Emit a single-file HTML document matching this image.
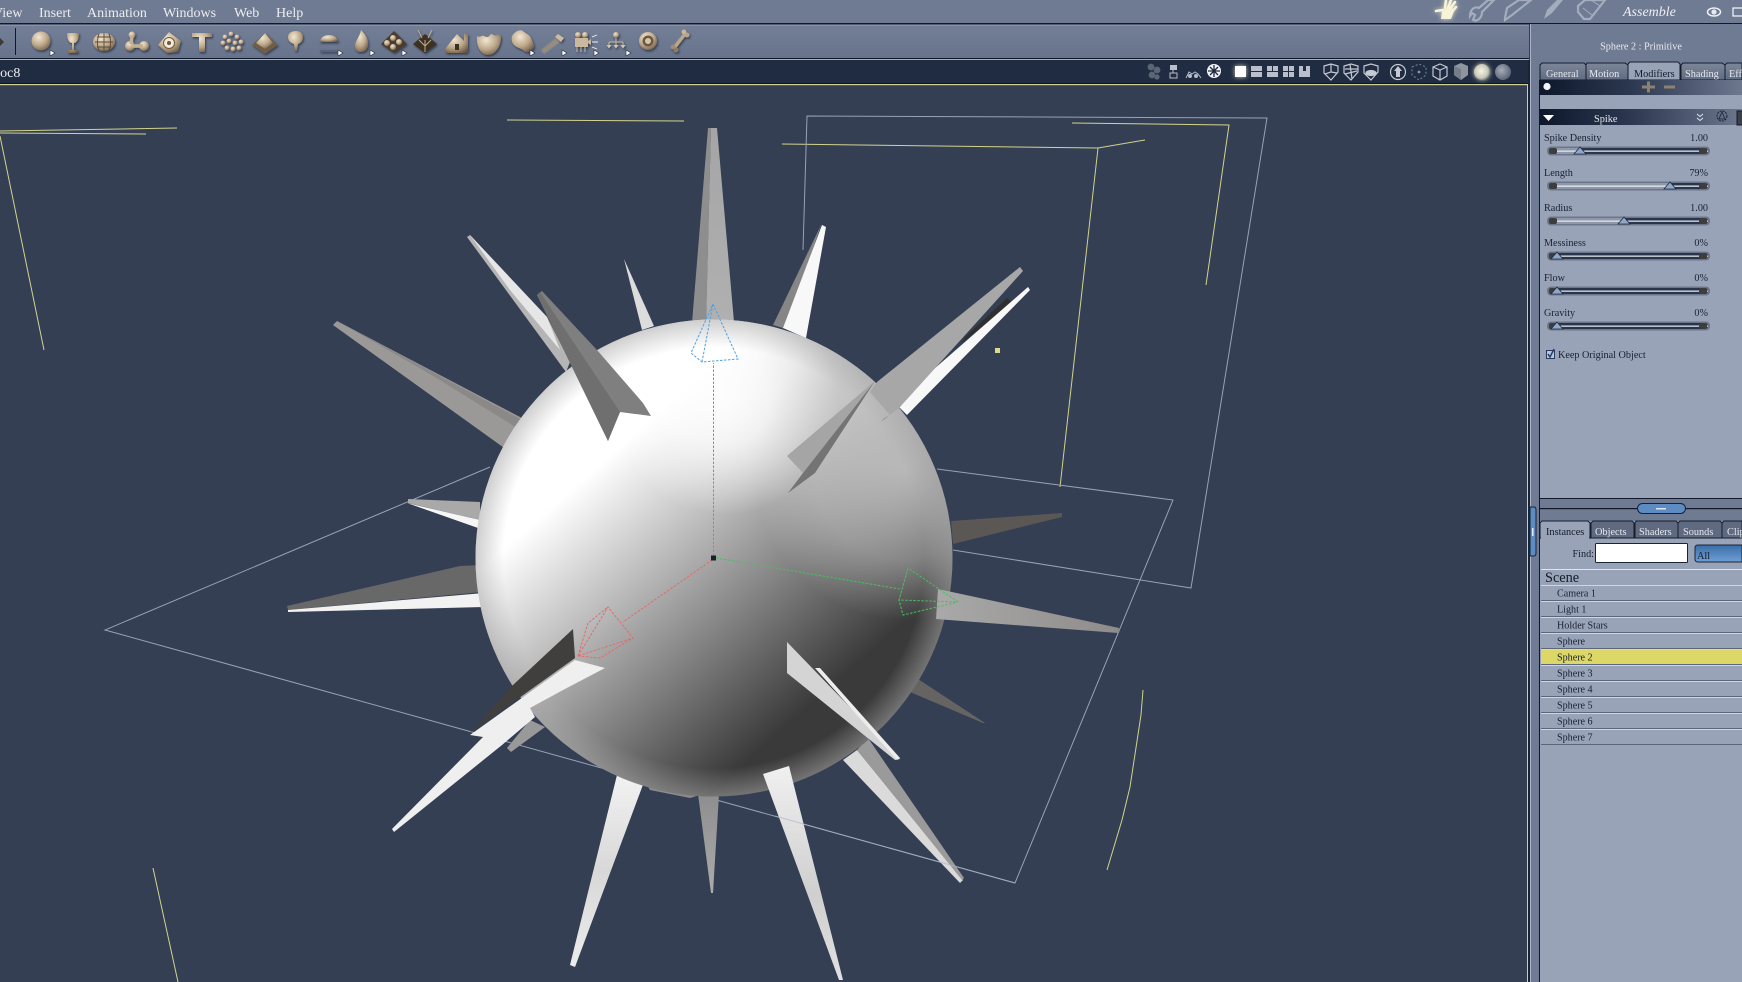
<!DOCTYPE html>
<html><head><meta charset="utf-8"><title>Sphere</title>
<style>
html,body{margin:0;padding:0;background:#343f54;width:1742px;height:982px;overflow:hidden}
svg{display:block;position:absolute;left:0;top:0}
text{font-family:"Liberation Serif",serif}
.m{font-size:14px;fill:#ecedf0}
.t{font-size:10.3px;fill:#e4e7ee}
.a{font-size:10.3px;fill:#141a28}
.l{font-size:10.2px;fill:#1a2130}
.r{font-size:10.1px;fill:#1a2130}
.g{fill:#b9bfcb;stroke:none}
.o{fill:none;stroke:#b5bccb;stroke-width:1}
.ol{fill:none;stroke:#c3c9d5;stroke-width:1.2}
.tan{fill:url(#tan)}
.dk{fill:#4a3f30}
.ar{fill:#fff;stroke:#222c40;stroke-width:.6}
</style></head><body>
<svg width="1742" height="982" viewBox="0 0 1742 982" xmlns="http://www.w3.org/2000/svg">
<defs>
<linearGradient id="sph" gradientUnits="userSpaceOnUse" x1="617" y1="449" x2="829" y2="689">
<stop offset="0" stop-color="#ffffff"/><stop offset="1" stop-color="#3a3a3a"/>
</linearGradient>
<radialGradient id="top" gradientUnits="userSpaceOnUse" cx="725" cy="400" r="115"><stop offset="0" stop-color="#fff" stop-opacity=".9"/><stop offset=".4" stop-color="#fff" stop-opacity=".7"/><stop offset="1" stop-color="#fff" stop-opacity="0"/></radialGradient>
<radialGradient id="glo" gradientUnits="userSpaceOnUse" cx="905" cy="470" r="150"><stop offset="0" stop-color="#ddd" stop-opacity=".6"/><stop offset=".6" stop-color="#ddd" stop-opacity=".35"/><stop offset="1" stop-color="#ddd" stop-opacity="0"/></radialGradient>
<radialGradient id="rim" gradientUnits="userSpaceOnUse" cx="714" cy="558" r="239"><stop offset=".88" stop-color="#aaa" stop-opacity="0"/><stop offset="1" stop-color="#a5a5a5" stop-opacity=".55"/></radialGradient>
<linearGradient id="bar" x1="0" x2="1" y1="0" y2="0"><stop offset="0" stop-color="#0e172b"/><stop offset=".45" stop-color="#2c3850"/><stop offset="1" stop-color="#6d788f"/></linearGradient>
<linearGradient id="tb" x1="0" x2="0" y1="0" y2="1"><stop offset="0" stop-color="#737f96"/><stop offset="1" stop-color="#68748c"/></linearGradient>
<linearGradient id="tabi" x1="0" x2="0" y1="0" y2="1"><stop offset="0" stop-color="#7d8799"/><stop offset="1" stop-color="#5f6b82"/></linearGradient>
<linearGradient id="blue" x1="0" x2="0" y1="0" y2="1"><stop offset="0" stop-color="#3a6ca8"/><stop offset="1" stop-color="#6fa0d4"/></linearGradient>
<radialGradient id="tan" cx=".38" cy=".3" r=".8"><stop offset="0" stop-color="#f2e6d2"/><stop offset=".55" stop-color="#bda789"/><stop offset="1" stop-color="#6a5842"/></radialGradient>
<radialGradient id="pearl" cx=".45" cy=".45" r=".6"><stop offset="0" stop-color="#f6f5e6"/><stop offset=".7" stop-color="#c9c9b8"/><stop offset="1" stop-color="#6c7280"/></radialGradient>
<radialGradient id="grey" cx=".4" cy=".4" r=".7"><stop offset="0" stop-color="#a7adb9"/><stop offset="1" stop-color="#505a6e"/></radialGradient>
<filter id="sh" x="-30%" y="-30%" width="170%" height="170%"><feDropShadow dx="1" dy="1.5" stdDeviation="1" flood-color="#1a2233" flood-opacity=".7"/></filter>
<filter id="gl" x="-60%" y="-60%" width="220%" height="220%"><feDropShadow dx="0" dy="0" stdDeviation="2.5" flood-color="#fbf6d0" flood-opacity=".8"/></filter>
<filter id="bl" x="-30%" y="-30%" width="160%" height="160%"><feGaussianBlur stdDeviation=".9"/></filter>
<linearGradient id="gA" x1="0" x2="0" y1="0" y2="1"><stop offset="0" stop-color="#a5a5a5"/><stop offset="1" stop-color="#b0b0b0"/></linearGradient>
<linearGradient id="gI" x1="0" x2="0" y1="0" y2="1"><stop offset="0" stop-color="#f2f2f2"/><stop offset=".5" stop-color="#d8d8d8"/><stop offset="1" stop-color="#ececec"/></linearGradient>
<linearGradient id="gK" x1="0" x2="0" y1="0" y2="1"><stop offset="0" stop-color="#f0f0f0"/><stop offset=".6" stop-color="#cfcfcf"/><stop offset="1" stop-color="#e0e0e0"/></linearGradient>
<linearGradient id="gJ" x1="0" x2="0" y1="0" y2="1"><stop offset="0" stop-color="#8e8e8e"/><stop offset="1" stop-color="#ababab"/></linearGradient>
<linearGradient id="gN" x1="0" x2="1" y1="0" y2="0"><stop offset="0" stop-color="#a9a9a9"/><stop offset="1" stop-color="#8f8c8a"/></linearGradient>
</defs>

<!-- chrome -->
<rect width="1742" height="982" fill="#343f54"/>
<rect x="0" y="0" width="1742" height="23" fill="#6f7b92"/>
<rect x="0" y="23" width="1530" height="1.5" fill="#10182a"/>
<rect x="1530" y="23" width="212" height="1" fill="#10182a"/>
<rect x="0" y="25" width="1529" height="33" fill="url(#tb)"/>
<rect x="0" y="24.5" width="1529" height="1" fill="#9aa4b8"/>
<rect x="0" y="58" width="1529" height="1" fill="#0f172a"/>
<rect x="0" y="59" width="1529" height="1" fill="#a6afc1"/>
<rect x="0" y="60" width="1529" height="24" fill="#202c42"/>
<rect x="0" y="83" width="1528" height="1" fill="#0f1626"/>
<rect x="0" y="84" width="1528" height="1.2" fill="#cfcf96"/>
<rect x="1527" y="84" width="1.2" height="898" fill="#cfcf96"/>
<rect x="1528" y="60" width="2" height="922" fill="#1b2436"/>
<rect x="1530" y="24" width="212" height="958" fill="#6f7b92"/>
<rect x="1530" y="24" width="1" height="958" fill="#aab3c5"/>
<rect x="1539" y="80" width="203" height="902" fill="#98a3b8"/>
<rect x="1539" y="80" width="1" height="902" fill="#10182a"/>

<!-- menu -->
<text class="m" x="-7" y="17">View</text>
<text class="m" x="39" y="17">Insert</text>
<text class="m" x="87" y="17">Animation</text>
<text class="m" x="163" y="17">Windows</text>
<text class="m" x="234" y="17">Web</text>
<text class="m" x="276" y="17">Help</text>
<text x="-10" y="77" font-size="14" fill="#ecedf0">Doc8</text>

<!-- toolbar -->
<rect x="15" y="28" width="1" height="27" fill="#10182a"/>
<polygon points="0,38 4,42 0,46" fill="#3d3a36"/>
<g filter="url(#sh)">
<circle class="tan" cx="41" cy="41" r="9.5"/>
<path class="tan" d="M67 33h12c0 6-2 10-5 10v7h4v3H68v-3h4v-7c-3 0-5-4-5-10z"/>
<ellipse class="tan" cx="104" cy="42" rx="11" ry="9"/>
<path d="M95 42h18M97 37h14M97 47h14M104 33v18M99 34c-2 5-2 12 0 16M109 34c2 5 2 12 0 16" stroke="#5a4a36" stroke-width=".9" fill="none"/>
<circle cx="132" cy="35" r="3.5" class="tan"/><circle cx="130" cy="46" r="5" class="tan"/><circle cx="144" cy="46" r="5" class="tan"/><path d="M132 36l-1 8M132 46h11" stroke="#c3b093" stroke-width="3.5"/>
<path class="tan" d="M169 32l12 9-3 11-11 1-9-8z"/>
<circle cx="169" cy="43" r="5.5" fill="#f3e9d8" stroke="#6a5842"/><circle cx="169" cy="43" r="2" fill="#6a5842"/>
<path class="tan" d="M192 33h20v4h-7v15h-6V37h-7z"/>
<g class="tan"><circle cx="225" cy="37" r="2.4"/><circle cx="231" cy="34" r="2.4"/><circle cx="237" cy="37" r="2.4"/><circle cx="223" cy="43" r="2.4"/><circle cx="229" cy="41" r="2.4"/><circle cx="235" cy="43" r="2.4"/><circle cx="241" cy="42" r="2.4"/><circle cx="227" cy="48" r="2.4"/><circle cx="233" cy="49" r="2.4"/><circle cx="239" cy="48" r="2.4"/></g>
<path d="M252 45l13-12 13 12-13 9z" fill="#6f5d47"/><path d="M256 43l9-10 8 10-8 6z" class="tan"/>
<path class="tan" d="M296 31c4 0 7 2 7 6s-2 6-5 7l-1 7h-2l-1-7c-3-1-6-3-6-7s4-6 8-6z"/>
<path class="tan" d="M320 42c0-4 4-7 9-7s9 3 9 7z"/><rect x="320" y="50" width="17" height="2" fill="#59647c"/>
<path class="tan" d="M361 30c5 5 8 10 7 16-1 5-5 6-8 6s-6-3-5-7c1-5 5-9 6-15z"/>
<path d="M381 44l13-13 13 13-13 9z" fill="#4c3e2e"/><g class="tan"><circle cx="387" cy="43" r="3"/><circle cx="393" cy="38" r="3"/><circle cx="399" cy="42" r="3"/><circle cx="393" cy="47" r="3"/></g>
<path d="M413 44l12-10 12 10-12 9z" fill="#3c3024"/><path d="M425 52V40M425 46l-6-6M425 46l6-6M418 30l4 8M432 30l-4 8" stroke="#c0ab8b" stroke-width="1" fill="none"/>
<path class="tan" d="M445 49l12-15 7 7v-7h4v16l-1 3h-21z"/><rect x="455" y="44" width="4" height="6" fill="#3b3127"/>
<path class="tan" d="M477 36c3 2 5-1 7 0s4 2 6-1 4 2 7 0 4 2 4 2c0 10-6 18-13 18s-12-9-11-19z"/>
<path class="tan" d="M512 36c3-5 8-7 11-5 3 3 6 3 8 7 2 5 5 9 1 12s-6 3-9 0c-3-2-6-2-9-5-2-2-3-6-2-9z"/>
<path d="M558 34l6 4-3 4-6-5z" fill="#cdbb9f"/>
</g>
<path d="M556 38l4 4-16 12-3-4z" fill="#a8957a" opacity=".7" filter="url(#bl)"/>
<g filter="url(#sh)">
<rect x="575" y="38" width="13" height="9" fill="#cbb99d"/><circle cx="578" cy="35" r="3" class="tan"/><circle cx="585" cy="35" r="3" class="tan"/><path d="M577 47v5M581 47v5M585 47v5" stroke="#cbb99d" fill="none"/><path d="M588 41l3-2v6l-3-2z" fill="#cbb99d"/>
</g>
<path d="M592 37l5-2M592 42h6M592 47l5 2" stroke="#f4f2ea" stroke-width=".9" fill="none"/>
<g filter="url(#sh)">
<circle cx="616" cy="35" r="3" class="tan"/><path d="M616 38v6M609 42h14M609 42v4M616 42v4M623 42v4" stroke="#ccb99d" fill="none"/><path d="M606.500 45h5l-2.500 3.500zM613.500 45h5l-2.500 3.500zM620.500 45h5l-2.500 3.500z" fill="#d6c5aa"/>
<circle cx="648" cy="41" r="9" class="tan"/><circle cx="648" cy="41" r="5.5" fill="#6a5842"/><circle cx="648" cy="41" r="3" fill="#d6c5aa"/>
<path d="M674 48l11-14" stroke="#b9a68a" stroke-width="3.5"/><circle cx="673" cy="47" r="2.500" fill="#a08d72"/><circle cx="676" cy="50" r="2.500" fill="#8d7b63"/><circle cx="684" cy="32" r="2.500" fill="#c8b69b"/><circle cx="687" cy="35" r="2.500" fill="#b9a68a"/>
</g>
<g class="ar"><path d="M50 50l5 3-5 3z"/><path d="M338 50l5 3-5 3z"/><path d="M370 50l5 3-5 3z"/><path d="M402 50l5 3-5 3z"/><path d="M530 50l5 3-5 3z"/><path d="M562 50l5 3-5 3z"/><path d="M594 50l5 3-5 3z"/><path d="M626 50l5 3-5 3z"/></g>

<!-- top right mode icons -->
<g filter="url(#gl)">
<path d="M1441 19l1-8 9-5 3 5-3 8z" fill="#f6f3d8"/>
<path d="M1443 10l-7 1M1445 8l1-8M1448 8l3-8M1450 9l5-7M1452 12l4-5" stroke="#f6f3d8" stroke-width="2.600" stroke-linecap="round" fill="none"/>
</g>
<path d="M1470 16c0-6 4-10 9-8l9-8h6l-12 12c0 6-5 10-9 8l2-5-3-2z M1474 20" fill="none" stroke="#a4adbf" stroke-width="2.2"/>
<path d="M1505 18l2-10 12-8h12l-19 15-7 5z" fill="none" stroke="#a4adbf" stroke-width="2.2"/>
<path d="M1544 19l3-9 10-10h6l-11 13z" fill="#a4adbf"/>
<path d="M1578 6l7-6h20l-15 19-6 0-6-7z" fill="none" stroke="#a4adbf" stroke-width="2.2"/><path d="M1583 8l9 7M1591 0l9 6" stroke="#a4adbf"/>
<text x="1623" y="16" font-size="14" font-style="italic" fill="#eef0f4">Assemble</text>
<ellipse cx="1714" cy="12" rx="6.5" ry="4" fill="none" stroke="#eef1f6" stroke-width="1.5"/><circle cx="1714" cy="12" r="2.6" fill="#e6eaf1"/>
<rect x="1733" y="8" width="12" height="8" fill="none" stroke="#eef1f6" stroke-width="1.3"/>

<!-- view bar icons -->
<g fill="#5a6578"><circle cx="1151" cy="67" r="3.4"/><circle cx="1157" cy="70" r="3.4"/><circle cx="1152" cy="75" r="3.4"/><circle cx="1157" cy="77" r="2.6"/></g>
<rect class="g" x="1170" y="65" width="7" height="5"/><path d="M1173 70v3" stroke="#b9bfcb"/><rect class="o" x="1170" y="73" width="7" height="5"/>
<path class="o" d="M1186 78l3-6 3 2 3-2 3 2 3 4" stroke="#9ea6b6"/><circle cx="1190" cy="76" r="2" fill="#b5bccb"/><circle cx="1196" cy="76" r="2" fill="#b5bccb"/>
<circle cx="1214" cy="71" r="7" fill="#f2f3f5"/><path d="M1208 71h12M1214 65v12M1210 67l8 8M1218 67l-8 8" stroke="#1e2a40" stroke-width="1.3"/>
<rect x="1235" y="66" width="11" height="11" fill="#fff" filter="url(#gl)"/>
<rect class="g" x="1251" y="66" width="11" height="5"/><rect class="g" x="1251" y="72" width="11" height="5"/>
<rect class="g" x="1267" y="66" width="5" height="5"/><rect class="g" x="1273" y="66" width="5" height="5"/><rect class="g" x="1267" y="72" width="11" height="5"/>
<rect class="g" x="1283" y="66" width="5" height="5"/><rect class="g" x="1289" y="66" width="5" height="5"/><rect class="g" x="1283" y="72" width="5" height="5"/><rect class="g" x="1289" y="72" width="5" height="5"/>
<path class="g" d="M1299 66h4v5h3v-5h4v11h-11z"/>
<g class="ol"><path d="M1324 66l7-2 7 2v6l-7 8-7-7zM1331 64v8l-6 2M1331 72l6 1"/><path d="M1344 66l7-2 7 2v6l-7 8-7-7zM1345 69h13M1350 64l2 15M1345 74l12-3"/><path d="M1364 66l7-2 7 2v6l-7 8-7-7z"/><ellipse cx="1371" cy="73" rx="5" ry="2.5" fill="#c3c9d5"/></g>
<circle cx="1398" cy="72" r="7.5" class="ol"/><path d="M1398 66l4 5h-2v6h-4v-6h-2z" fill="#c3c9d5"/>
<g fill="none" stroke="#7c8698" stroke-dasharray="2 2"><path d="M1412 67l7-3 7 3v8l-7 5-7-5z"/></g><circle cx="1419" cy="72" r="1.4" fill="#8d96a7"/>
<path class="ol" d="M1433 67l7-3 7 3v9l-7 4-7-4zM1433 67l7 3 7-3M1440 70v10"/>
<path d="M1454 66l7-3 7 3v9l-7 5-7-5z" fill="#8e959f"/><path d="M1454 66l7 3v11l-7-5z" fill="#767d88"/>
<circle cx="1482" cy="72" r="8" fill="url(#pearl)" filter="url(#gl)"/>
<circle cx="1503" cy="72" r="8" fill="url(#grey)"/>

<!-- viewport lines: yellow -->
<g fill="none" stroke="#d3d38c" stroke-width="1">
<path d="M0 131L177 128M0 133L146 134M0 136L44 350"/>
<path d="M507 120L684 121"/>
<path d="M782 144L1098 148L1145 140M1098 148L1060 487"/>
<path d="M1072 123L1229 125L1206 285"/>
<path d="M1143 690L1141 715L1130 787L1122 820L1107 870"/>
<path d="M153 868L178 982"/>
</g>
<!-- grey box -->
<g fill="none" stroke="#98a2b5" stroke-width="1">
<path d="M803 250L807 116L1267 118L1191 588L953 550"/>
<path d="M937 469L1173 500L1015 883L105 630L490 467"/>
</g>

<!-- back spikes -->
<polygon points="708,128 692,323 706,320 711,128" fill="#8e8e8e"/>
<polygon points="711,128 717,128 734,322 706,322" fill="url(#gA)"/>
<polygon points="467,237 470,235 547,317 570,362 566,372" fill="#b5b5b5"/>
<polygon points="470,235 547,317 560,350 510,290" fill="#e6e6e6"/>
<polygon points="624,259 642,330 654,326" fill="#dcdcdc"/>
<polygon points="333,325 337,321 520,417 528,423 517,428 507,450" fill="#9b9998"/>
<polygon points="337,321 528,423 517,428 430,374" fill="#8b8988"/>
<polygon points="408,499 480,502 480,520 408,503" fill="#a9a9a9"/>
<polygon points="407,503 480,520 478,528" fill="#f6f6f6"/>
<polygon points="287,606 460,566 482,565 482,592 288,610" fill="#686868"/>
<polygon points="288,610 484,593 484,607 288,612" fill="#f2f2f2"/>
<polygon points="821,225 773,325 786,329" fill="#868686"/>
<polygon points="822,225 826,227 806,338 783,328" fill="#f8f8f8"/>
<polygon points="617,775 644,782 575,967 570,965" fill="url(#gI)"/>
<polygon points="644,780 700,795 690,798 650,790" fill="#8a8a8a"/>
<polygon points="698,794 719,794 713,893 711,893" fill="url(#gJ)"/>
<polygon points="951,521 1062,513 1062,517 953,544" fill="#5a5755"/>
<polygon points="918,679 985,723 983,723 910,692" fill="#666462"/>
<polygon points="843,760 857,750 963,880 960,883" fill="#dadada"/>
<polygon points="857,750 868,738 964,878 962,880" fill="#9a9a9a"/>
<polygon points="1007,298 965,337 962,343 1012,302" fill="#2f2f2f"/>
<polygon points="1028,287 1030,290 907,415 895,403" fill="#f8f8f8"/>

<!-- sphere -->
<circle cx="714" cy="558" r="238.5" fill="url(#sph)"/>
<circle cx="714" cy="558" r="238.5" fill="url(#top)"/>
<circle cx="714" cy="558" r="238.5" fill="url(#glo)"/>
<circle cx="714" cy="558" r="238.5" fill="url(#rim)"/>

<!-- front spikes -->
<polygon points="1020,267 1023,271 900,407 890,415 870,392 877,382" fill="#a7a7a7"/>
<polygon points="890,415 881,422 884,418" fill="#999"/>
<polygon points="787,456 875,381 803,473" fill="#a5a5a5"/>
<polygon points="875,381 803,473 788,493 815,473" fill="#747474"/>
<polygon points="537,295 542,291 597,350 643,403 651,416 620,412 608,441" fill="#7f7f7f"/>
<polygon points="537,295 540,292 620,412 608,441" fill="#6f6f6f"/>
<polygon points="573,629 575,658 470,733 513,685" fill="#403f3e"/>
<polygon points="507,748 530,720 545,727 511,752" fill="#999"/>
<polygon points="575,660 605,668 563,690 530,708 535,717 502,745 394,832 392,829 483,737 470,735" fill="#efefef"/>
<polygon points="763,774 789,766 843,980 839,980" fill="url(#gK)"/>
<polygon points="787,642 900,759 895,760 787,673" fill="#d4d4d4"/>
<polygon points="815,668 820,668 900,758 897,760" fill="#ededed"/>
<polygon points="938,589 1119,628 1118,633 936,619" fill="url(#gN)"/>
<rect x="995" y="348" width="5" height="5" fill="#dada88"/>
<path d="M775 816L1015 883" stroke="#aab4c8" stroke-width="1" opacity=".65"/>

<!-- gizmo -->
<g fill="none" stroke-width="1" stroke-dasharray="2.5 1.5">
<g stroke="#4f9fe0"><path d="M713.5 556V363"/><path d="M713 304L738 359L702 362L691 353L713 304M702 362L713 304"/></g>
<g stroke="#e26a6a"><path d="M712 560L623 622"/><path d="M578 656L608 607L633 638L578 656M578 656L588 623L608 607M578 656L600 658L633 638"/></g>
<g stroke="#47c060"><path d="M716 558L900 589"/><path d="M958 602L908 568L899 600L958 602M908 568L899 600L903 615L958 602"/></g>
</g>
<rect x="711" y="555.5" width="5" height="5" fill="#1c2024"/>

<!-- panel -->
<text x="1641" y="49.500" text-anchor="middle" font-size="10.2" fill="#e6e8ee">Sphere 2 : Primitive</text>
<path d="M1540 80v-15l2-2h42l2 2v15z" fill="url(#tabi)" stroke="#141c2e"/>
<path d="M1586 80V65l1-2h38l3 2v15z" fill="url(#tabi)" stroke="#141c2e"/>
<path d="M1681 80V65l2-2h39l3 2v15z" fill="url(#tabi)" stroke="#141c2e"/>
<path d="M1725 80V65l2-2h15v17z" fill="url(#tabi)" stroke="#141c2e"/>
<path d="M1628 80V64l2-2h48l2 2v16z" fill="#98a3b8" stroke="#141c2e"/>
<text class="t" x="1546" y="77">General</text>
<text class="t" x="1589" y="77">Motion</text>
<text class="a" x="1634" y="77">Modifiers</text>
<text class="t" x="1685" y="77">Shading</text>
<text class="t" x="1729" y="77">Effects</text>
<rect x="1540" y="80" width="202" height="15" fill="url(#bar)"/>
<circle cx="1547" cy="86.5" r="3.6" fill="#f4f5f8"/>
<path d="M1642 85.5h5v-4h3v4h5v3h-5v4h-3v-4h-5z" fill="#8d8170"/><rect x="1664" y="85.5" width="11" height="3" fill="#8d8170"/>
<rect x="1540" y="109" width="202" height="16" fill="url(#bar)"/>
<path d="M1543 115h11l-5.500 6z" fill="#fff"/>
<text class="t" x="1594" y="122">Spike</text>
<path d="M1697 114l3 2.500 3-2.500M1697 118l3 2.500 3-2.500" stroke="#dfe3ea" fill="none"/>
<circle cx="1722" cy="116" r="5" fill="none" stroke="#1b2233" stroke-dasharray="2 1"/><path d="M1722 112l-3 7h6z" fill="none" stroke="#1b2233" stroke-width=".8"/>
<rect x="1737" y="111" width="6" height="14" fill="#3b3f48" stroke="#151a26"/>

<!-- sliders -->
<g>
<text class="l" x="1544" y="141">Spike Density</text><text class="l" x="1708" y="141" text-anchor="end">1.00</text>
<text class="l" x="1544" y="176">Length</text><text class="l" x="1708" y="176" text-anchor="end">79%</text>
<text class="l" x="1544" y="211">Radius</text><text class="l" x="1708" y="211" text-anchor="end">1.00</text>
<text class="l" x="1544" y="246">Messiness</text><text class="l" x="1708" y="246" text-anchor="end">0%</text>
<text class="l" x="1544" y="281">Flow</text><text class="l" x="1708" y="281" text-anchor="end">0%</text>
<text class="l" x="1544" y="316">Gravity</text><text class="l" x="1708" y="316" text-anchor="end">0%</text>
</g>
<g><rect x="1547" y="146.500" width="163" height="9" rx="4" fill="#6c768b"/><rect x="1549" y="148" width="159" height="6" rx="3" fill="#2a344a"/><rect x="1556" y="148" width="24" height="6" fill="#8f98a9"/><rect x="1549" y="150.500" width="159" height="1.300" fill="#dfe4ed"/><rect x="1549" y="148" width="8" height="6" rx="2" fill="#3d3d3d"/><rect x="1699" y="148" width="8" height="6" rx="2" fill="#3d3d3d"/><path d="M1574 154l6-7 6 7z" fill="#8fa8c8" stroke="#1f2b40" stroke-width=".8"/></g>
<g><rect x="1547" y="181.500" width="163" height="9" rx="4" fill="#6c768b"/><rect x="1549" y="183" width="159" height="6" rx="3" fill="#2a344a"/><rect x="1556" y="183" width="114" height="6" fill="#8f98a9"/><rect x="1549" y="185.500" width="159" height="1.300" fill="#e6eaf1"/><rect x="1549" y="183" width="8" height="6" rx="2" fill="#3d3d3d"/><rect x="1699" y="183" width="8" height="6" rx="2" fill="#3d3d3d"/><path d="M1664 189l6-7 6 7z" fill="#8fa8c8" stroke="#1f2b40" stroke-width=".8"/></g>
<g><rect x="1547" y="216.500" width="163" height="9" rx="4" fill="#6c768b"/><rect x="1549" y="218" width="159" height="6" rx="3" fill="#2a344a"/><rect x="1556" y="218" width="68" height="6" fill="#8f98a9"/><rect x="1549" y="220.500" width="159" height="1.300" fill="#dfe4ed"/><rect x="1549" y="218" width="8" height="6" rx="2" fill="#3d3d3d"/><rect x="1699" y="218" width="8" height="6" rx="2" fill="#3d3d3d"/><path d="M1618 224l6-7 6 7z" fill="#8fa8c8" stroke="#1f2b40" stroke-width=".8"/></g>
<g><rect x="1547" y="251.500" width="163" height="9" rx="4" fill="#6c768b"/><rect x="1549" y="253" width="159" height="6" rx="3" fill="#2a344a"/><rect x="1549" y="255.500" width="159" height="1.300" fill="#dfe4ed"/><rect x="1549" y="253" width="8" height="6" rx="2" fill="#3d3d3d"/><rect x="1699" y="253" width="8" height="6" rx="2" fill="#3d3d3d"/><path d="M1551 259l6-7 6 7z" fill="#8fa8c8" stroke="#1f2b40" stroke-width=".8"/></g>
<g><rect x="1547" y="286.500" width="163" height="9" rx="4" fill="#6c768b"/><rect x="1549" y="288" width="159" height="6" rx="3" fill="#2a344a"/><rect x="1549" y="290.500" width="159" height="1.300" fill="#dfe4ed"/><rect x="1549" y="288" width="8" height="6" rx="2" fill="#3d3d3d"/><rect x="1699" y="288" width="8" height="6" rx="2" fill="#3d3d3d"/><path d="M1551 294l6-7 6 7z" fill="#8fa8c8" stroke="#1f2b40" stroke-width=".8"/></g>
<g><rect x="1547" y="321.500" width="163" height="9" rx="4" fill="#6c768b"/><rect x="1549" y="323" width="159" height="6" rx="3" fill="#2a344a"/><rect x="1549" y="325.500" width="159" height="1.300" fill="#dfe4ed"/><rect x="1549" y="323" width="8" height="6" rx="2" fill="#3d3d3d"/><rect x="1699" y="323" width="8" height="6" rx="2" fill="#3d3d3d"/><path d="M1551 329l6-7 6 7z" fill="#8fa8c8" stroke="#1f2b40" stroke-width=".8"/></g>
<rect x="1546.500" y="350.500" width="8" height="8" fill="#b9c6db" stroke="#2a3a58"/>
<path d="M1548 354l2 3 4-8" stroke="#1d3f73" stroke-width="1.500" fill="none"/>
<text class="l" x="1558" y="358">Keep Original Object</text>

<!-- lower panel -->
<rect x="1540" y="498" width="202" height="1" fill="#10182a"/>
<rect x="1540" y="499" width="202" height="22" fill="#6f7b92"/>
<rect x="1540" y="508" width="202" height="1.200" fill="#10182a"/>
<rect x="1637.500" y="503.500" width="48" height="10" rx="5" fill="#5d8cc2" stroke="#15233a"/>
<rect x="1656" y="508" width="10" height="1.500" fill="#dbe6f3"/>
<path d="M1530 507h4q2 0 2 3v43q0 3-2 3h-4z" fill="#5d8cc2" stroke="#15233a"/>
<rect x="1532" y="528" width="1.500" height="8" fill="#e6edf6"/>
<path d="M1591 538V523l2-2h39l2 2v15z" fill="#5f6a81" stroke="#141c2e"/>
<path d="M1635 538V523l1-2h40l2 2v15z" fill="#5f6a81" stroke="#141c2e"/>
<path d="M1678 538V523l2-2h40l2 2v15z" fill="#5f6a81" stroke="#141c2e"/>
<path d="M1722 538V523l2-2h18v17z" fill="#5f6a81" stroke="#141c2e"/>
<path d="M1540 538V523l2-2h46l2 2v15z" fill="#98a3b8" stroke="#141c2e"/>
<rect x="1541" y="537" width="48" height="3" fill="#98a3b8"/>
<text class="a" x="1546" y="535">Instances</text>
<text class="t" x="1595" y="535">Objects</text>
<text class="t" x="1639" y="535">Shaders</text>
<text class="t" x="1683" y="535">Sounds</text>
<text class="t" x="1727" y="535">Clips</text>
<text class="l" x="1594" y="557" text-anchor="end">Find:</text>
<rect x="1595.500" y="543.500" width="92" height="19" rx="1" fill="#fff" stroke="#1b2436"/>
<path d="M1742 545h-44q-3 0-3 3v11q0 3 3 3h44z" fill="url(#blue)" stroke="#1b2436"/>
<text class="a" x="1697" y="559">All</text>
<rect x="1541" y="569" width="201" height="1" fill="#dfe5ef"/>
<text x="1545" y="582" font-size="14.3" fill="#141a28">Scene</text>
<g fill="#cfd6e3">
<rect x="1541" y="585" width="201" height="1"/><rect x="1541" y="601" width="201" height="1"/><rect x="1541" y="617" width="201" height="1"/><rect x="1541" y="633" width="201" height="1"/><rect x="1541" y="649" width="201" height="1"/><rect x="1541" y="665" width="201" height="1"/><rect x="1541" y="681" width="201" height="1"/><rect x="1541" y="697" width="201" height="1"/><rect x="1541" y="713" width="201" height="1"/><rect x="1541" y="729" width="201" height="1"/>
</g>
<g fill="#5c667c">
<rect x="1541" y="600" width="201" height="1"/><rect x="1541" y="616" width="201" height="1"/><rect x="1541" y="632" width="201" height="1"/><rect x="1541" y="648" width="201" height="1"/><rect x="1541" y="664" width="201" height="1"/><rect x="1541" y="680" width="201" height="1"/><rect x="1541" y="696" width="201" height="1"/><rect x="1541" y="712" width="201" height="1"/><rect x="1541" y="728" width="201" height="1"/><rect x="1541" y="744" width="201" height="1"/>
</g>
<rect x="1541" y="650" width="201" height="14" fill="#dcd766"/>
<text class="r" x="1557" y="596.500">Camera 1</text>
<text class="r" x="1557" y="612.500">Light 1</text>
<text class="r" x="1557" y="628.500">Holder Stars</text>
<text class="r" x="1557" y="644.500">Sphere</text>
<text class="r" x="1557" y="660.500">Sphere 2</text>
<text class="r" x="1557" y="676.500">Sphere 3</text>
<text class="r" x="1557" y="692.500">Sphere 4</text>
<text class="r" x="1557" y="708.500">Sphere 5</text>
<text class="r" x="1557" y="724.500">Sphere 6</text>
<text class="r" x="1557" y="740.500">Sphere 7</text>
</svg>
</body></html>
